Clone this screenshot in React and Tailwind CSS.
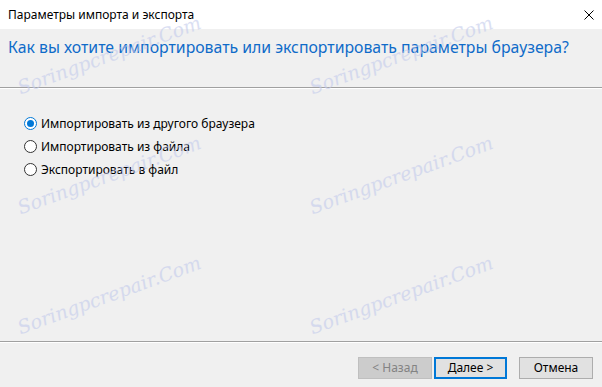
import React from "react";

const marks = [
  [23, 95], [315, 95],
  [23, 215], [315, 215],
  [23, 335], [315, 335],
];

function Radio({ checked, label }) {
  return (
    <div className="flex items-center h-[23px]">
      <span
        className={
          "w-[13px] h-[13px] rounded-full bg-white flex items-center justify-center border " +
          (checked ? "border-[#0078d7]" : "border-[#333333]")
        }
      >
        {checked && <span className="w-[7px] h-[7px] rounded-full bg-[#0078d7]" />}
      </span>
      <span className="ml-[4px] text-[12px] leading-none text-black">{label}</span>
    </div>
  );
}

export default function App() {
  return (
    <div
      className="relative w-[602px] h-[387px] bg-[#f0f0f0] overflow-hidden flex flex-col"
      style={{ fontFamily: '"Noto Sans", "Open Sans", sans-serif' }}
    >
      <div className="h-[29px] bg-white flex items-center justify-between pl-[8px] pr-[8px] shrink-0">
        <span className="text-[12px] text-black leading-none">Параметры импорта и экспорта</span>
        <svg width="10" height="10" viewBox="0 0 10 10">
          <path d="M0.5 0.5 L9.5 9.5 M9.5 0.5 L0.5 9.5" stroke="#000" strokeWidth="1" />
        </svg>
      </div>
      <div className="h-[58px] shrink-0 pl-[8px] pt-[9px]">
        <h1 className="text-[15.8px] leading-[18px] text-[#0f6bc9] font-normal whitespace-nowrap">
          Как вы хотите импортировать или экспортировать параметры браузера?
        </h1>
      </div>
      <div className="h-px bg-[#a0a0a0] shrink-0" />
      <div className="h-px bg-white shrink-0" />
      <div className="flex flex-col pl-[24px] pt-[23px]">
        <Radio checked label="Импортировать из другого браузера" />
        <Radio label="Импортировать из файла" />
        <Radio label="Экспортировать в файл" />
      </div>
      <div className="flex-1" />
      <div className="h-px bg-[#a0a0a0] shrink-0" />
      <div className="h-px bg-white shrink-0" />
      <div className="h-[44px] shrink-0 flex items-start pt-[14px] pr-[9px] justify-end">
        <button className="w-[74px] h-[22px] bg-[#cccccc] border border-[#bfbfbf] text-[12px] text-[#838383] leading-none">
          &lt; Назад
        </button>
        <button className="ml-[2px] w-[73px] h-[22px] bg-[#e1e1e1] border-2 border-[#0078d7] text-[12px] text-black leading-none">
          Далее &gt;
        </button>
        <button className="ml-[12px] w-[74px] h-[22px] bg-[#e1e1e1] border border-[#adadad] text-[12px] text-black leading-none">
          Отмена
        </button>
      </div>
      {marks.map(([x, y], i) => (
        <div
          key={i}
          className="absolute pointer-events-none whitespace-nowrap text-[19px] italic text-[#c3cbec] opacity-60 origin-bottom-left"
          style={{
            left: x,
            top: y - 22,
            transform: "rotate(-20deg)",
            fontFamily: '"DejaVu Serif", serif',
          }}
        >
          Soringpcrepair.Com
        </div>
      ))}
    </div>
  );
}
